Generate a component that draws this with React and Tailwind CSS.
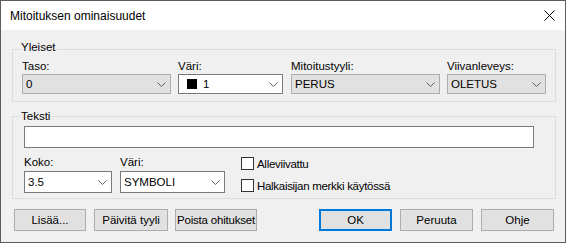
import React from 'react';

const font = { fontFamily: '"Liberation Sans", Arial, sans-serif' };

const Chevron = () => (
    <svg width="9" height="5" viewBox="0 0 9 5" className="shrink-0">
        <path d="M0.5 0.5 L4.5 4.5 L8.5 0.5" fill="none" stroke="#606060" strokeWidth="1" />
    </svg>
);

const Combo = ({ value, width, height = 'h-[20px]', flat = false, swatch = false }) => (
    <div
        className={`${width} ${height} flex items-center justify-between border pl-[3px] pr-[4px] ${flat ? 'bg-[#e1e1e1] border-[#adadad]' : 'bg-white border-[#7a7a7a]'}`}
    >
        <div className="flex items-center">
            {swatch && <span className="w-[10px] h-[10px] bg-black ml-[5px] mr-[6px]" />}
            <span className="text-[11.5px] leading-[14px] text-black">{value}</span>
        </div>
        <Chevron />
    </div>
);

const Field = ({ label, children, className = '' }) => (
    <div className={`flex flex-col ${className}`}>
        <span className="text-[11.5px] leading-[16px] h-[16px] text-black">{label}</span>
        {children}
    </div>
);

const Checkbox = ({ label }) => (
    <div className="flex items-center h-[13px]">
        <span className="w-[13px] h-[13px] border border-[#333333] bg-white" />
        <span className="ml-[3px] text-[11.5px] leading-[14px] tracking-[-0.3px] text-black">{label}</span>
    </div>
);

const Button = ({ children, width, primary = false }) => (
    <button
        className={`${width} h-[22px] flex items-center justify-center bg-[#e1e1e1] text-[11.5px] leading-[14px] text-black whitespace-nowrap ${primary ? 'border-2 border-[#0078d7]' : 'border border-[#adadad]'}`}
    >
        {children}
    </button>
);

export default function App() {
    return (
        <div style={font} className="w-[566px] h-[243px] border border-[#5c5c5c] bg-[#f0f0f0] flex flex-col">
            {/* title bar */}
            <div className="h-[29px] bg-white flex items-center justify-between pl-[9px] pr-[10px]">
                <span className="text-[12px] leading-[14px] text-black">Mitoituksen ominaisuudet</span>
                <svg width="11" height="11" viewBox="0 0 11 11" className="mb-[1px]">
                    <path d="M0.5 0.5 L10.5 10.5 M10.5 0.5 L0.5 10.5" stroke="#000" strokeWidth="1" />
                </svg>
            </div>

            {/* Yleiset */}
            <div className="relative ml-[11px] mt-[19px] w-[544px] h-[53px] border border-[#dcdcdc] pl-[9px] pt-[8px]">
                <span className="absolute left-[7px] top-[-10px] px-[1px] bg-[#f0f0f0] text-[11.5px] leading-[14px] text-black">Yleiset</span>
                <div className="flex">
                    <Field label="Taso:">
                        <Combo value="0" width="w-[149px]" flat />
                    </Field>
                    <Field label="Väri:" className="ml-[7px]">
                        <Combo value="1" width="w-[105px]" swatch />
                    </Field>
                    <Field label="Mitoitustyyli:" className="ml-[8px]">
                        <Combo value="PERUS" width="w-[149px]" flat />
                    </Field>
                    <Field label="Viivanleveys:" className="ml-[7px]">
                        <Combo value="OLETUS" width="w-[99px]" flat />
                    </Field>
                </div>
            </div>

            {/* Teksti */}
            <div className="relative ml-[11px] mt-[14px] w-[544px] h-[83px] border border-[#dcdcdc] pl-[11px] pt-[9px]">
                <span className="absolute left-[7px] top-[-8px] px-[1px] bg-[#f0f0f0] text-[11.5px] leading-[14px] text-black">Teksti</span>
                <div className="w-[510px] h-[22px] bg-white border border-[#7a7a7a]" />
                <div className="flex mt-[6px]">
                    <Field label="Koko:">
                        <div className="mt-[1px]">
                            <Combo value="3.5" width="w-[88px]" height="h-[22px]" />
                        </div>
                    </Field>
                    <Field label="Väri:" className="ml-[8px]">
                        <div className="mt-[1px]">
                            <Combo value="SYMBOLI" width="w-[105px]" height="h-[22px]" />
                        </div>
                    </Field>
                    <div className="ml-[16px] pt-[3px] flex flex-col gap-[9px]">
                        <Checkbox label="Alleviivattu" />
                        <Checkbox label="Halkaisijan merkki käytössä" />
                    </div>
                </div>
            </div>

            {/* buttons */}
            <div className="flex mt-[10px] pl-[13px] pr-[11px]">
                <div className="flex">
                    <Button width="w-[72px]">Lisää...</Button>
                    <div className="ml-[8px]">
                        <Button width="w-[74px]">Päivitä tyyli</Button>
                    </div>
                    <div className="ml-[7px]">
                        <Button width="w-[82px]">
                            <span className="tracking-[-0.2px]">Poista ohitukset</span>
                        </Button>
                    </div>
                </div>
                <div className="flex ml-auto gap-[8px]">
                    <Button width="w-[73px]" primary>OK</Button>
                    <Button width="w-[73px]">Peruuta</Button>
                    <Button width="w-[73px]">Ohje</Button>
                </div>
            </div>
        </div>
    );
}
